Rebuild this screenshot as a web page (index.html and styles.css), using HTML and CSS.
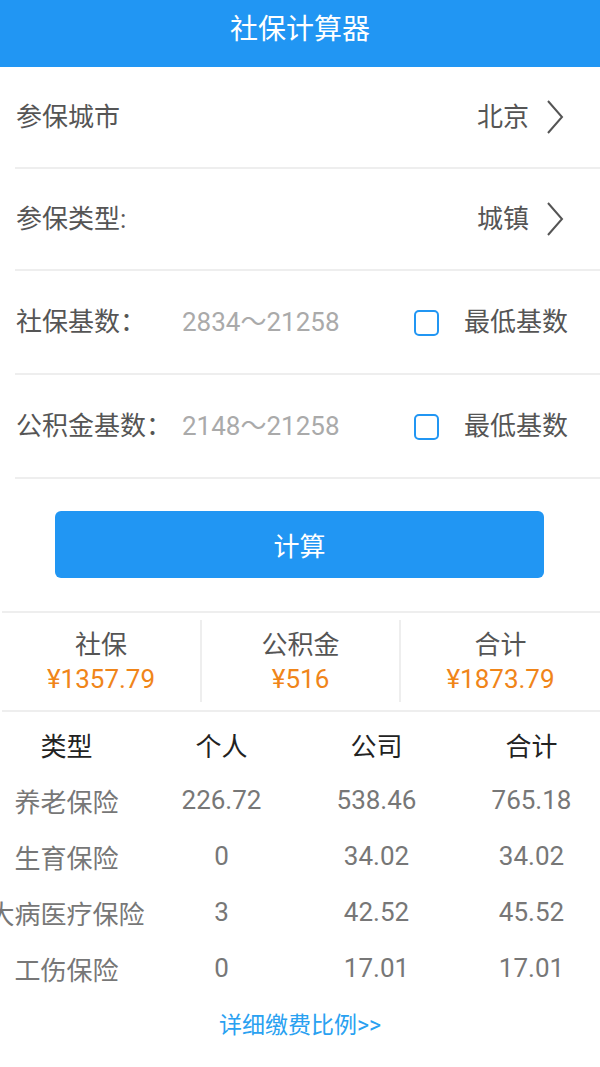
FILE: index.html
```html
<!DOCTYPE html>
<html lang="zh-CN">
<head>
<meta charset="utf-8">
<title>社保计算器</title>
<link rel="stylesheet" href="styles.css">
</head>
<body>
<header class="topbar">社保计算器</header>

<section class="form">
  <div class="row">
    <span class="label">参保城市</span>
    <span class="spacer"></span>
    <span class="value">北京</span>
    <svg class="chev" viewBox="0 0 18 34" width="18" height="34"><path d="M2 1 L16 17 L2 33" fill="none" stroke="#555" stroke-width="2"/></svg>
  </div>
  <div class="row">
    <span class="label">参保类型:</span>
    <span class="spacer"></span>
    <span class="value">城镇</span>
    <svg class="chev" viewBox="0 0 18 34" width="18" height="34"><path d="M2 1 L16 17 L2 33" fill="none" stroke="#555" stroke-width="2"/></svg>
  </div>
  <div class="row row-tall">
    <span class="label label-fixed">社保基数：</span>
    <span class="placeholder">2834～21258</span>
    <span class="check"></span>
    <span class="check-text">最低基数</span>
  </div>
  <div class="row row-tall">
    <span class="label label-fixed">公积金基数：</span>
    <span class="placeholder">2148～21258</span>
    <span class="check"></span>
    <span class="check-text">最低基数</span>
  </div>
</section>

<div class="btn-wrap"><button class="btn">计算</button></div>

<section class="summary">
  <div class="sum-col">
    <div class="sum-label">社保</div>
    <div class="sum-value">¥1357.79</div>
  </div>
  <div class="sum-col">
    <div class="sum-label">公积金</div>
    <div class="sum-value">¥516</div>
  </div>
  <div class="sum-col">
    <div class="sum-label">合计</div>
    <div class="sum-value">¥1873.79</div>
  </div>
</section>

<section class="table">
  <div class="th">类型</div><div class="th">个人</div><div class="th">公司</div><div class="th">合计</div>
  <div class="td">养老保险</div><div class="td">226.72</div><div class="td">538.46</div><div class="td">765.18</div>
  <div class="td">生育保险</div><div class="td">0</div><div class="td">34.02</div><div class="td">34.02</div>
  <div class="td">大病医疗保险</div><div class="td">3</div><div class="td">42.52</div><div class="td">45.52</div>
  <div class="td">工伤保险</div><div class="td">0</div><div class="td">17.01</div><div class="td">17.01</div>
</section>

<div class="link">详细缴费比例&gt;&gt;</div>
</body>
</html>
```

FILE: styles.css
```css
html, body {
  margin: 0;
  padding: 0;
}
body {
  width: 600px;
  overflow: hidden;
  background: #ffffff;
  font-family: Roboto, "Noto Sans CJK SC", sans-serif;
  color: #555555;
}

.topbar {
  height: 67px;
  background: #2196f3;
  color: #ffffff;
  font-size: 28px;
  line-height: 60px;
  text-align: center;
}

.form {
  margin-left: 15px;
}
.row {
  display: flex;
  align-items: center;
  height: 100px;
  border-bottom: 2px solid #eeeeee;
  padding: 0 36px 0 1px;
  font-size: 26px;
  line-height: 32px;
}
.row-tall {
  height: 102px;
  padding-right: 32px;
}
.label {
  color: #555555;
}
.label-fixed {
  width: 166px;
  flex: none;
}
.spacer {
  flex: 1;
}
.value {
  color: #555555;
  margin-right: 17px;
}
.chev {
  display: block;
}
.placeholder {
  flex: 1;
  color: #aaaaaa;
}
.check {
  width: 21px;
  height: 22px;
  border: 2px solid #2196f3;
  border-radius: 5px;
  margin-right: 25px;
  margin-top: 1px;
  flex: none;
}
.check-text {
  color: #555555;
}

.btn-wrap {
  padding: 32px 56px 0 55px;
}
.btn {
  display: block;
  width: 100%;
  height: 67px;
  border: none;
  border-radius: 6px;
  background: #2196f3;
  color: #ffffff;
  font-family: Roboto, "Noto Sans CJK SC", sans-serif;
  font-size: 26px;
  padding: 0;
}

.summary {
  margin-top: 33px;
  margin-left: 2px;
  border-top: 2px solid #eeeeee;
  border-bottom: 2px solid #eeeeee;
  display: grid;
  grid-template-columns: 198px 199px 201px;
  padding: 7px 0 8px;
}
.sum-col {
  height: 82px;
  text-align: center;
  border-left: 2px solid #eeeeee;
}
.sum-col:first-child {
  border-left: none;
}
.sum-label {
  font-size: 26px;
  line-height: 34px;
  margin-top: 8px;
  color: #555555;
}
.sum-value {
  font-size: 26px;
  line-height: 34px;
  color: #f08519;
}

.table {
  display: grid;
  grid-template-columns: repeat(4, 155px);
  grid-auto-rows: 56px;
  margin-left: -11px;
  padding-top: 4px;
}
.th, .td {
  display: flex;
  align-items: center;
  justify-content: center;
  white-space: nowrap;
  font-size: 26px;
}
.th {
  color: #222222;
}
.td {
  color: #777777;
}

.link {
  height: 60px;
  line-height: 60px;
  text-align: center;
  font-size: 23px;
  color: #29a1f1;
}
```
